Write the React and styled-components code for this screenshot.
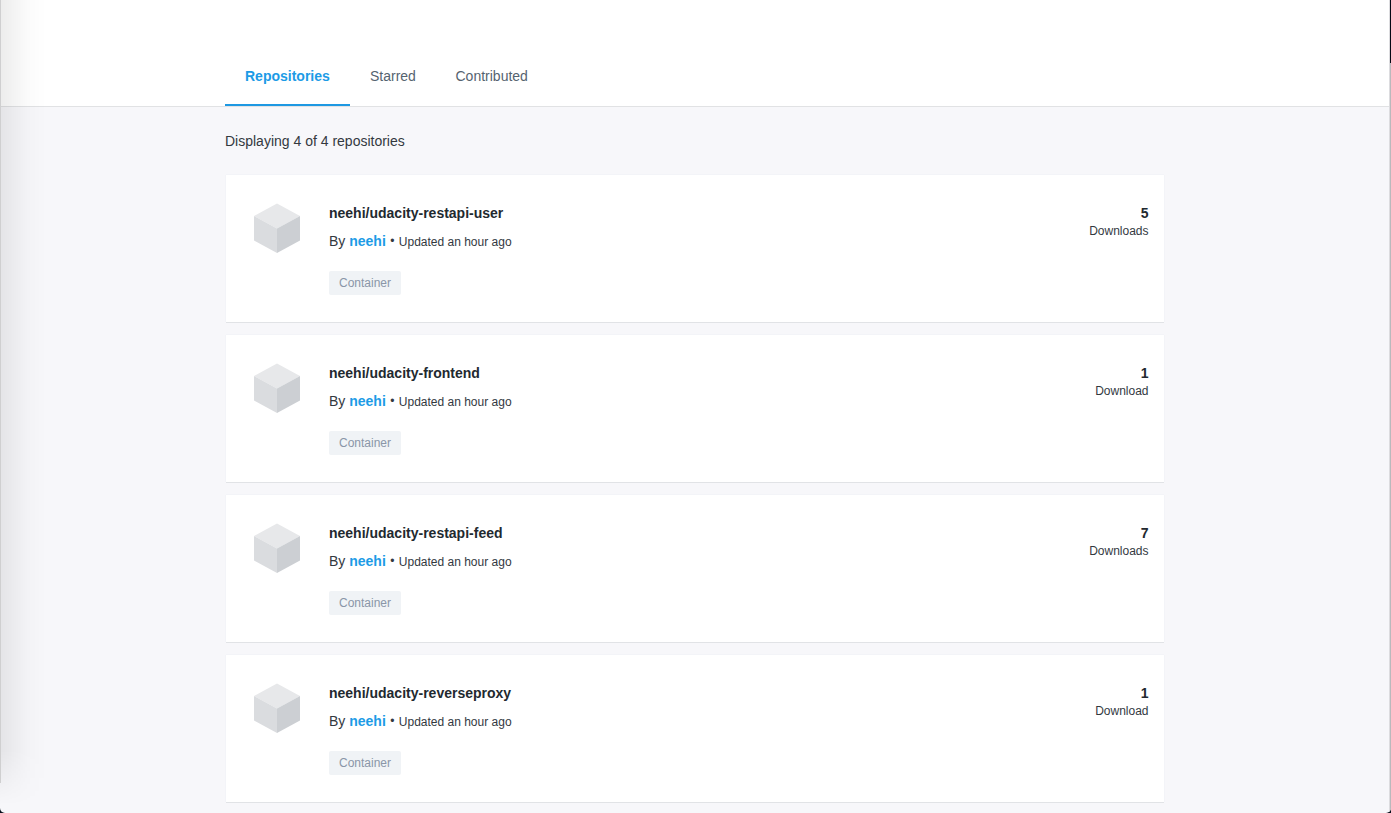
import React from "react";
import styled, { createGlobalStyle } from "styled-components";

const GlobalStyle = createGlobalStyle`
  * { box-sizing: border-box; }
  html, body { margin: 0; background: #070f1c; }
  body {
    overflow: hidden;
    font-family: "Helvetica Neue", Helvetica, "Liberation Sans", Arial, sans-serif;
    color: #33393f;
  }
`;

const Window = styled.div`
  position: relative;
  width: 1391px;
  height: 813px;
  overflow: hidden;
  background: #f7f7fa;
  border-radius: 0 0 5px 5px;
`;

const Header = styled.header`
  height: 107px;
  padding: 47px 0 0 225px;
  background: #fff;
  border-bottom: 1px solid #e1e2e4;
`;

const Tabs = styled.nav`
  display: flex;
  height: 59px;
`;

const Tab = styled.a`
  height: 59px;
  width: ${(p) => p.$width}px;
  padding-left: 20px;
  font-size: 14px;
  line-height: 59px;
  white-space: nowrap;
  color: ${(p) => (p.$active ? "#1c9be6" : "#556370")};
  font-weight: ${(p) => (p.$active ? 700 : 400)};
  box-shadow: ${(p) => (p.$active ? "inset 0 -2px #1e98e2" : "none")};
`;

const Content = styled.main`
  width: 940px;
  margin-left: 225px;
`;

const Summary = styled.p`
  margin: 0;
  padding-top: 24px;
  height: 68px;
  font-size: 14px;
  line-height: 20px;
`;

const List = styled.div`
  display: flex;
  flex-direction: column;
  gap: 13px;
  padding: 0 1px;
`;

const Card = styled.article`
  display: flex;
  height: 147px;
  padding: 28px 15.5px 0 28px;
  background: #fff;
  box-shadow: 0 1px 0 #e1e3e6, 0 0 1px #e2e4e9;
`;

const Cube = styled.svg`
  width: 46px;
  height: 51px;
  flex: none;
`;

const Details = styled.div`
  flex: 1;
  margin-left: 29px;
`;

const Title = styled.h2`
  margin: 0;
  font-size: 14px;
  line-height: 20px;
  color: #22292f;
`;

const Byline = styled.div`
  display: flex;
  height: 20px;
  margin-top: 8px;
  font-size: 14px;
  line-height: 20px;
  white-space: pre;
`;

const Owner = styled.a`
  font-weight: 700;
  color: #1c9be6;
`;

const Separator = styled.span`
  width: 13px;
  text-align: center;
  font-size: 12px;
`;

const Updated = styled.span`
  font-size: 12px;
  line-height: 22px;
`;

const Tag = styled.span`
  display: block;
  width: 72px;
  height: 24px;
  margin-top: 20px;
  border-radius: 2px;
  background: #f0f3f6;
  color: #8a96a8;
  font-size: 12px;
  line-height: 24px;
  text-align: center;
`;

const Stats = styled.div`
  text-align: right;
`;

const Count = styled.div`
  font-size: 14px;
  font-weight: 700;
  line-height: 20px;
  color: #22292f;
`;

const CountLabel = styled.div`
  font-size: 12px;
  line-height: 16px;
`;

const LeftShade = styled.div`
  position: absolute;
  left: 0;
  top: 0;
  width: 46px;
  height: 813px;
  pointer-events: none;
  background: linear-gradient(to right, rgba(0, 0, 0, 0.075), rgba(0, 0, 0, 0.05) 25%, rgba(0, 0, 0, 0.015) 60%, transparent);
  mask-image: linear-gradient(to bottom, #000 750px, transparent 805px);
`;

const LeftEdge = styled.div`
  position: absolute;
  left: 0;
  top: 0;
  width: 1px;
  height: 783px;
  background: #cfcfd0;
`;

const RightEdge = styled.div`
  position: absolute;
  right: 0;
  top: 0;
  width: 2px;
  height: 813px;
  background: linear-gradient(to right, #dcdcdf 50%, #b9b9bc 50%);
`;

const DarkEdge = styled.div`
  position: absolute;
  right: 0;
  top: 0;
  width: 1px;
  height: 63px;
  background: #050914;
`;

const tabs = [
  { label: "Repositories", width: 125, active: true },
  { label: "Starred", width: 85.5 },
  { label: "Contributed", width: 113 },
];

const repositories = [
  { name: "restapi-user", downloads: 5 },
  { name: "frontend", downloads: 1 },
  { name: "restapi-feed", downloads: 7 },
  { name: "reverseproxy", downloads: 1 },
];

function RepositoryIcon() {
  return (
    <Cube viewBox="0 0 46 51" aria-hidden="true">
      <path d="M23 .5 46 13 23 25.5 0 13Z" fill="#e7e8ea" />
      <path d="M0 13 23 25.5V50L0 37.5Z" fill="#dadcdf" />
      <path d="M46 13 23 25.5V50L46 37.5Z" fill="#cccfd3" />
    </Cube>
  );
}

function Repository({ name, downloads }) {
  return (
    <Card>
      <RepositoryIcon />
      <Details>
        <Title>neehi/udacity-{name}</Title>
        <Byline>
          <span>By </span>
          <Owner>neehi</Owner>
          <Separator>•</Separator>
          <Updated>Updated an hour ago</Updated>
        </Byline>
        <Tag>Container</Tag>
      </Details>
      <Stats>
        <Count>{downloads}</Count>
        <CountLabel>{downloads === 1 ? "Download" : "Downloads"}</CountLabel>
      </Stats>
    </Card>
  );
}

export default function App() {
  return (
    <>
      <GlobalStyle />
      <Window>
        <Header>
          <Tabs>
            {tabs.map((t) => (
              <Tab key={t.label} $active={t.active} $width={t.width}>
                {t.label}
              </Tab>
            ))}
          </Tabs>
        </Header>
        <Content>
          <Summary>Displaying 4 of 4 repositories</Summary>
          <List>
            {repositories.map((r) => (
              <Repository key={r.name} {...r} />
            ))}
          </List>
        </Content>
        <LeftShade />
        <LeftEdge />
        <RightEdge />
        <DarkEdge />
      </Window>
    </>
  );
}
